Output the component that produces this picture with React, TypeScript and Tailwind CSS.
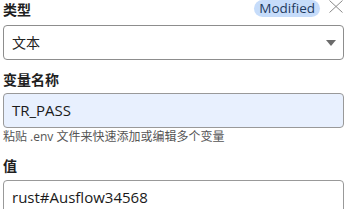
const font = { fontFamily: '"Open Sans", "Noto Sans CJK SC", sans-serif' };

const Label = ({ children }: { children: React.ReactNode }) => (
    <div className="text-[14px] leading-[20px] font-bold text-[#1f1f1f]">{children}</div>
);

export default function App() {
    return (
        <div className="w-[347px] h-[209px] overflow-hidden bg-white px-[3px]" style={font}>
            <div className="flex items-start justify-between h-[20px]">
                <Label>类型</Label>
                <div className="flex items-start gap-[9px] pr-[1px]">
                    <span className="h-[17px] px-[5px] rounded-full bg-[#c6dcfa] text-[13.5px] leading-[17px] text-[#1e3a5f]">
                        Modified
                    </span>
                    <svg width="14" height="13" viewBox="0 0 14 13">
                        <path d="M0.5 0.5 L13.5 12.5 M13.5 0.5 L0.5 12.5" stroke="#8a8a8a" strokeWidth="1" fill="none" />
                    </svg>
                </div>
            </div>

            <div className="mt-[5px] h-[35px] flex items-center justify-between border border-[#8d8d8d] rounded-[4px] pl-[8px] pr-[7px]">
                <span className="text-[14px] text-[#222]">文本</span>
                <svg width="10" height="6" viewBox="0 0 10 6">
                    <path d="M0 0 L10 0 L5 6 Z" fill="#6b6b6b" />
                </svg>
            </div>

            <div className="mt-[10px]">
                <Label>变量名称</Label>
            </div>
            <div className="mt-[3px] h-[35px] flex items-center border border-[#999] rounded-[4px] bg-[#e8f0fe] px-[8px]">
                <span className="text-[15px] text-[#1a1a1a]">TR_PASS</span>
            </div>
            <div className="mt-[1px] text-[12px] leading-[16px] text-[#555]">粘贴 .env 文件来快速添加或编辑多个变量</div>

            <div className="mt-[11px]">
                <Label>值</Label>
            </div>
            <div className="mt-[4px] h-[35px] flex items-center border border-[#999] rounded-[4px] px-[8px]">
                <span className="text-[15px] text-[#1a1a1a]">rust#Ausflow34568</span>
            </div>
        </div>
    );
}
